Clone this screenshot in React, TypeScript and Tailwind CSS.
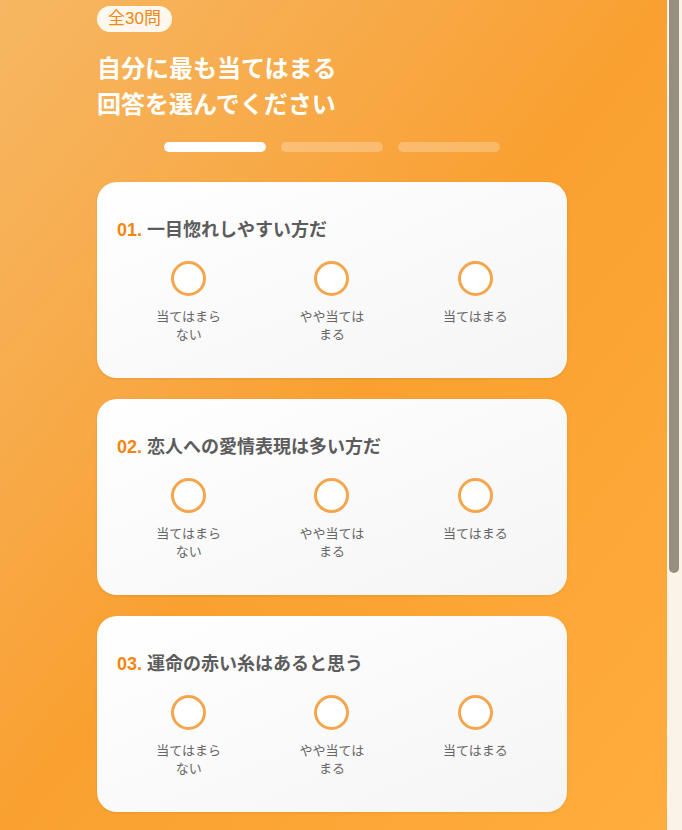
const questions = [
  '一目惚れしやすい方だ',
  '恋人への愛情表現は多い方だ',
  '運命の赤い糸はあると思う',
  '好きな人には自分から告白する方だ',
];

const choices = ['当てはまらない', 'やや当てはまる', '当てはまる'];

function QuestionCard({ index, text }: { index: number; text: string }) {
  const no = String(index + 1).padStart(2, '0');
  return (
    <div className="rounded-[20px] bg-gradient-to-br from-white to-[#f5f5f5] px-5 pt-[36px] pb-[34px] shadow-[0_1px_3px_rgba(0,0,0,0.08)]">
      <p className="text-[18px] font-bold leading-6 text-[#5c5c5c]">
        <span className="text-[#f5850f]">{no}.</span> {text}
      </p>
      <div className="mt-[19px] grid grid-cols-3">
        {choices.map((label) => (
          <button key={label} type="button" className="flex flex-col items-center">
            <span className="block h-[35px] w-[35px] rounded-full border-[3px] border-[#f5a64c] bg-white" />
            <span className="mt-[12px] w-[70px] text-center text-[13px] leading-[18px] text-[#666]">
              {label}
            </span>
          </button>
        ))}
      </div>
    </div>
  );
}

export default function App() {
  return (
    <div className="flex h-screen [font-family:'Liberation_Sans','Noto_Sans_CJK_JP',sans-serif]">
      <div className="flex-1 overflow-y-auto bg-gradient-to-br from-[#f6b762] via-[#f9a030] to-[#ffad3d] pr-[3px] [scrollbar-width:none]">
        <div className="mx-auto w-[470px] pt-[6px] pb-[172px]">
          <span className="inline-block rounded-full bg-[#fff8ee] px-[11px] text-[17px] leading-[26px] text-[#f5860f]">
            全30問
          </span>
          <h1 className="mt-[19px] text-[24px] font-bold leading-[36px] text-white">
            自分に最も当てはまる
            <br />
            回答を選んでください
          </h1>
          <div className="mt-[19px] flex justify-center gap-[15px]">
            <div className="h-[10px] w-[102px] rounded-full bg-white" />
            <div className="h-[10px] w-[102px] rounded-full bg-white/25" />
            <div className="h-[10px] w-[102px] rounded-full bg-white/25" />
          </div>
          <div className="mt-[30px] flex flex-col gap-[21px]">
            {questions.map((q, i) => (
              <QuestionCard key={q} index={i} text={q} />
            ))}
          </div>
        </div>
      </div>
      {/* scrollbar */}
      <div className="w-[15px] bg-[#faf3e8] pl-[2px] pr-[3px]">
        <div className="h-[573px] rounded-b-full bg-[#978e82]" />
      </div>
    </div>
  );
}
